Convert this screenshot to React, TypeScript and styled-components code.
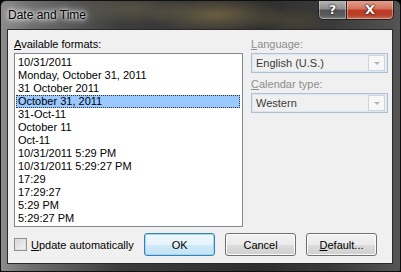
import React, { useState } from 'react';
import styled, { createGlobalStyle } from 'styled-components';

const GlobalStyle = createGlobalStyle`
  html, body {
    margin: 0;
    padding: 0;
    width: 401px;
    height: 272px;
    overflow: hidden;
    background: #000;
  }
`;

const Window = styled.div`
  box-sizing: border-box;
  width: 401px;
  height: 272px;
  display: flex;
  flex-direction: column;
  border: 1px solid #101010;
  border-radius: 6px 6px 2px 2px;
  overflow: hidden;
  background:
    radial-gradient(ellipse 70px 18px at 215px 14px, rgba(150, 130, 80, 0.55), transparent),
    radial-gradient(ellipse 60px 16px at 130px 8px, rgba(120, 110, 80, 0.45), transparent),
    radial-gradient(ellipse 40px 14px at 290px 20px, rgba(110, 95, 60, 0.35), transparent),
    linear-gradient(90deg, #8c8c8c 0px, #6e6e6e 30px, #3c3c3c 120px, #2e2e2e 260px, #3a3a3a 330px, #555 401px);
  font-family: "Liberation Sans", Arial, sans-serif;
`;

const TitleBar = styled.div`
  height: 28px;
  display: flex;
  align-items: flex-start;
  padding-left: 7px;
`;

const Title = styled.div`
  margin-top: 7px;
  font-size: 12px;
  color: #000;
  text-shadow: 0 0 6px #fff, 0 0 10px rgba(255, 255, 255, 0.9), 0 0 3px #fff;
`;

const CaptionButtons = styled.div`
  margin-left: auto;
  margin-right: 6px;
  display: flex;
`;

const CaptionButton = styled.div<{ $close?: boolean }>`
  box-sizing: border-box;
  width: ${(p) => (p.$close ? '47px' : '29px')};
  height: 20px;
  margin-top: -1px;
  display: flex;
  align-items: center;
  justify-content: center;
  border: 1px solid #222;
  border-top: none;
  border-left: ${(p) => (p.$close ? 'none' : '1px solid #222')};
  border-radius: ${(p) => (p.$close ? '0 0 5px 0' : '0 0 0 5px')};
  box-shadow: inset 0 0 0 1px rgba(255, 255, 255, 0.35);
  background: ${(p) =>
    p.$close
      ? 'linear-gradient(180deg, #e5a590 0%, #d2735c 45%, #c03a24 55%, #b5402a 80%, #d06e55 100%)'
      : 'linear-gradient(180deg, #b9b9b9 0%, #8e8e8e 45%, #555 55%, #5b5b5b 80%, #7a7a7a 100%)'};
  color: #fff;
  font-family: "DejaVu Sans", sans-serif;
  font-weight: bold;
  font-size: 13px;
  text-shadow: 0 0 2px #000, 0 0 1px #000;
`;

const Client = styled.div`
  flex: 1;
  margin: 0 7px 7px 6px;
  border: 1px solid #2a2a2a;
  background: #f0f0f0;
  padding: 7px 5px 0 6px;
  display: flex;
  flex-direction: column;
  font-size: 11px;
  color: #000;
`;

const Columns = styled.div`
  display: grid;
  grid-template-columns: 229px 137px;
  column-gap: 8px;
`;

const Column = styled.div`
  display: flex;
  flex-direction: column;
`;

const Label = styled.div<{ $disabled?: boolean }>`
  font-size: 11px;
  line-height: 15px;
  height: 15px;
  margin-bottom: 1px;
  color: ${(p) => (p.$disabled ? '#8d8d8d' : '#000')};
`;

const Key = styled.span`
  text-decoration: underline;
`;

const ListBox = styled.div`
  box-sizing: border-box;
  height: 174px;
  border: 1px solid #828790;
  background: #fff;
  padding: 2px 2px 0 1px;
`;

const Item = styled.div<{ $selected?: boolean }>`
  box-sizing: border-box;
  height: 13px;
  line-height: 12px;
  font-size: 11px;
  padding-left: 2px;
  white-space: nowrap;
  background: ${(p) => (p.$selected ? '#99c9ff' : 'transparent')};
  outline: ${(p) => (p.$selected ? '1px dotted #333' : 'none')};
  outline-offset: -1px;
`;

const Combo = styled.div`
  box-sizing: border-box;
  height: 20px;
  border: 1px solid #afc1d6;
  background: #f0f0f0;
  box-shadow: inset 0 0 0 1px #dde6f1;
  display: flex;
  align-items: center;
  padding: 0 2px 0 4px;
  margin-bottom: 4px;
  color: #3a3a3a;
  font-size: 11px;
`;

const ComboText = styled.span`
  flex: 1;
`;

const ComboArrow = styled.div`
  box-sizing: border-box;
  width: 17px;
  height: 16px;
  border: 1px solid #cfd5dc;
  background: #f7f7f7;
  display: flex;
  align-items: center;
  justify-content: center;
  &::after {
    content: '';
    border-left: 3px solid transparent;
    border-right: 3px solid transparent;
    border-top: 3px solid #b5b5b5;
  }
`;

const Footer = styled.div`
  display: flex;
  align-items: center;
  margin-top: 6px;
`;

const CheckRow = styled.label`
  display: flex;
  align-items: center;
  gap: 4px;
  width: 134px;
  font-size: 11px;
`;

const Check = styled.span`
  box-sizing: border-box;
  width: 13px;
  height: 13px;
  border: 1px solid #8e8f8f;
  background: linear-gradient(135deg, #d5d5d5, #f6f6f6);
  box-shadow: inset 0 0 0 1px #e0e0e0;
`;

const Button = styled.button<{ $default?: boolean }>`
  box-sizing: border-box;
  width: 73px;
  height: 23px;
  margin-right: 10px;
  border-radius: 3px;
  border: 1px solid ${(p) => (p.$default ? '#3c7fb1' : '#707070')};
  background: ${(p) =>
    p.$default
      ? 'linear-gradient(180deg, #f0f8fd 0%, #e6f3fb 50%, #d0eaf8 50%, #c3e3f6 100%)'
      : 'linear-gradient(180deg, #f2f2f2 0%, #ebebeb 50%, #dddddd 50%, #cfcfcf 100%)'};
  box-shadow: inset 0 0 0 1px ${(p) => (p.$default ? '#9fd8f7' : '#fbfbfb')};
  font-family: "Liberation Sans", Arial, sans-serif;
  font-size: 11px;
  color: #000;
  padding: 0;
`;

const formats = [
  '10/31/2011',
  'Monday, October 31, 2011',
  '31 October 2011',
  'October 31, 2011',
  '31-Oct-11',
  'October 11',
  'Oct-11',
  '10/31/2011 5:29 PM',
  '10/31/2011 5:29:27 PM',
  '17:29',
  '17:29:27',
  '5:29 PM',
  '5:29:27 PM',
];

export default function App() {
  const [selected, setSelected] = useState<number>(3);

  return (
    <>
      <GlobalStyle />
      <Window>
        <TitleBar>
          <Title>Date and Time</Title>
          <CaptionButtons>
            <CaptionButton>?</CaptionButton>
            <CaptionButton $close>X</CaptionButton>
          </CaptionButtons>
        </TitleBar>
        <Client>
          <Columns>
            <Column>
              <Label>
                <Key>A</Key>vailable formats:
              </Label>
              <ListBox>
                {formats.map((f, i) => (
                  <Item key={i} $selected={i === selected} onClick={() => setSelected(i)}>
                    {f}
                  </Item>
                ))}
              </ListBox>
            </Column>
            <Column>
              <Label $disabled>
                <Key>L</Key>anguage:
              </Label>
              <Combo>
                <ComboText>English (U.S.)</ComboText>
                <ComboArrow />
              </Combo>
              <Label $disabled>
                <Key>C</Key>alendar type:
              </Label>
              <Combo>
                <ComboText>Western</ComboText>
                <ComboArrow />
              </Combo>
            </Column>
          </Columns>
          <Footer>
            <CheckRow>
              <Check />
              <span>
                <Key>U</Key>pdate automatically
              </span>
            </CheckRow>
            <Button $default>OK</Button>
            <Button>Cancel</Button>
            <Button>
              <Key>D</Key>efault...
            </Button>
          </Footer>
        </Client>
      </Window>
    </>
  );
}
